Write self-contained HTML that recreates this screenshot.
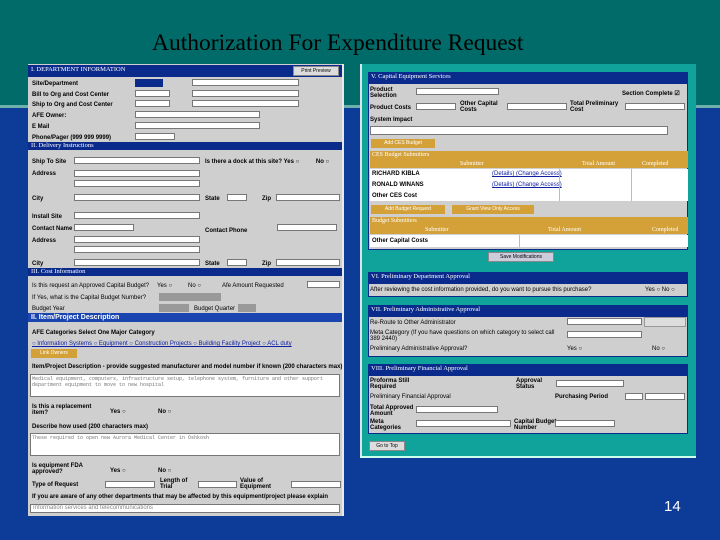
<!DOCTYPE html>
<html><head><style>
*{margin:0;padding:0;box-sizing:border-box}
body{width:720px;height:540px;overflow:hidden;background:#0d3b98;position:relative;font-family:"Liberation Sans",sans-serif;font-size:6px;color:#000}
.a{position:absolute}
.teal{left:0;top:0;width:720px;height:105px;background:#006b68}
.strip{left:0;top:105px;width:720px;height:3px;background:#6fb0ac}
h1{position:absolute;left:152px;top:30px;font-family:"Liberation Serif",serif;font-weight:normal;font-size:23.5px;color:#000;white-space:nowrap}
.hd{background:#0a2a8c;color:#fff;font-family:"Liberation Serif",serif;font-size:6.5px;padding-left:3px;line-height:10px}
.gr{background:#cfcfcf}
.in{background:#fff;border:1px solid #777;height:7px}
.gold{background:#d4a038;color:#fff}
.t{position:absolute;white-space:nowrap;font-weight:bold}
.n{font-weight:normal}
.s{position:absolute;top:0}
</style></head><body>
<div class="a teal"></div><div class="a strip"></div>
<h1>Authorization For Expenditure Request</h1>

<!-- Left panel -->
<div class="a gr" style="left:28px;top:64px;width:314px;height:452px"></div>
<div class="a" style="left:342px;top:64px;width:2px;height:452px;background:#e8e8e8"></div>
<div class="a hd" style="left:28px;top:65px;width:314px;height:12px">I. DEPARTMENT INFORMATION</div>
<div class="a" style="left:293px;top:66px;width:46px;height:10px;background:#ddd;border:1px solid #888;font-size:5px;text-align:center;line-height:8px">Print Preview</div>
<div class="t" style="left:32px;top:81px">Site/Department</div>
<div class="t" style="left:32px;top:92px">Bill to Org and Cost Center</div>
<div class="t" style="left:32px;top:102px">Ship to Org and Cost Center</div>
<div class="t" style="left:32px;top:113px">AFE Owner:</div>
<div class="t" style="left:32px;top:124px">E Mail</div>
<div class="t" style="left:32px;top:135px">Phone/Pager (999 999 9999)</div>
<div class="a" style="left:135px;top:79px;width:28px;height:8px;background:#0a2a8c"></div>
<div class="a in" style="left:135px;top:90px;width:35px"></div>
<div class="a in" style="left:135px;top:100px;width:35px"></div>
<div class="a in" style="left:192px;top:79px;width:107px"></div>
<div class="a in" style="left:192px;top:90px;width:107px"></div>
<div class="a in" style="left:192px;top:100px;width:107px"></div>
<div class="a in" style="left:135px;top:111px;width:125px"></div>
<div class="a in" style="left:135px;top:122px;width:125px"></div>
<div class="a in" style="left:135px;top:133px;width:40px"></div>
<div class="a hd" style="left:28px;top:142px;width:314px;height:8px;line-height:8px">II. Delivery Instructions</div>
<div class="t" style="left:32px;top:159px">Ship To Site</div>
<div class="t" style="left:32px;top:171px">Address</div>
<div class="t" style="left:32px;top:196px">City</div>
<div class="t" style="left:32px;top:214px">Install Site</div>
<div class="t" style="left:32px;top:226px">Contact Name</div>
<div class="t" style="left:32px;top:238px">Address</div>
<div class="t" style="left:32px;top:261px">City</div>
<div class="t" style="left:205px;top:159px">Is there a dock at this site? Yes ○ &nbsp;&nbsp;&nbsp;&nbsp;&nbsp;&nbsp;&nbsp;&nbsp; No ○</div>
<div class="t" style="left:205px;top:196px">State</div><div class="t" style="left:262px;top:196px">Zip</div>
<div class="t" style="left:205px;top:228px">Contact Phone</div>
<div class="t" style="left:205px;top:261px">State</div><div class="t" style="left:262px;top:261px">Zip</div>
<div class="a in" style="left:74px;top:157px;width:126px"></div>
<div class="a in" style="left:74px;top:170px;width:126px"></div>
<div class="a in" style="left:74px;top:180px;width:126px"></div>
<div class="a in" style="left:74px;top:194px;width:126px"></div>
<div class="a in" style="left:227px;top:194px;width:20px"></div>
<div class="a in" style="left:276px;top:194px;width:64px"></div>
<div class="a in" style="left:74px;top:212px;width:126px"></div>
<div class="a in" style="left:74px;top:224px;width:60px"></div>
<div class="a in" style="left:277px;top:224px;width:60px"></div>
<div class="a in" style="left:74px;top:236px;width:126px"></div>
<div class="a in" style="left:74px;top:246px;width:126px"></div>
<div class="a in" style="left:74px;top:259px;width:126px"></div>
<div class="a in" style="left:227px;top:259px;width:20px"></div>
<div class="a in" style="left:276px;top:259px;width:64px"></div>
<div class="a hd" style="left:28px;top:268px;width:314px;height:8px;line-height:8px">III. Cost Information</div>
<div class="t n" style="left:32px;top:283px">Is this request an Approved Capital Budget?</div>
<div class="t n" style="left:157px;top:283px">Yes ○</div>
<div class="t n" style="left:188px;top:283px">No ○</div>
<div class="t n" style="left:222px;top:283px">Afe Amount Requested</div>
<div class="a in" style="left:307px;top:281px;width:33px"></div>
<div class="t n" style="left:32px;top:295px">If Yes, what is the Capital Budget Number?</div>
<div class="a" style="left:159px;top:293px;width:62px;height:8px;background:#999"></div>
<div class="t n" style="left:32px;top:306px">Budget Year</div>
<div class="t n" style="left:194px;top:306px">Budget Quarter</div>
<div class="a" style="left:159px;top:304px;width:30px;height:8px;background:#999"></div>
<div class="a" style="left:238px;top:304px;width:18px;height:8px;background:#999"></div>
<div class="a" style="left:28px;top:313px;width:314px;height:9px;background:#1a44b0;color:#fff;font-size:7px;font-weight:bold;padding-left:3px;line-height:9px">II. Item/Project Description</div>
<div class="t" style="left:32px;top:330px">AFE Categories Select One Major Category</div>
<div class="t n" style="left:32px;top:341px;color:#1020a0;text-decoration:underline">○ Information Systems ○ Equipment ○ Construction Projects ○ Building Facility Project ○ ACL duty</div>
<div class="a gold" style="left:31px;top:349px;width:46px;height:9px;font-size:5px;text-align:center;line-height:9px">Link Owners</div>
<div class="t" style="left:32px;top:364px">Item/Project Description - provide suggested manufacturer and model number if known (200 characters max)</div>
<div class="a in" style="left:30px;top:374px;width:310px;height:23px;font-family:'Liberation Mono',monospace;font-size:5px;color:#777;font-weight:normal;padding:1px">Medical equipment, computers, infrastructure setup, telephone system, furniture and other support department equipment to move to new hospital</div>
<div class="t" style="left:32px;top:404px">Is this a replacement<br>item?</div>
<div class="t" style="left:110px;top:409px">Yes ○</div><div class="t" style="left:158px;top:409px">No ○</div>
<div class="t" style="left:32px;top:424px">Describe how used (200 characters max)</div>
<div class="a in" style="left:30px;top:433px;width:310px;height:23px;font-family:'Liberation Mono',monospace;font-size:5px;color:#777;font-weight:normal;padding:1px">These required to open new Aurora Medical Center in Oshkosh</div>
<div class="t" style="left:32px;top:463px">Is equipment FDA<br>approved?</div>
<div class="t" style="left:110px;top:468px">Yes ○</div><div class="t" style="left:158px;top:468px">No ○</div>
<div class="t" style="left:32px;top:482px">Type of Request</div>
<div class="a in" style="left:105px;top:481px;width:50px"></div>
<div class="t" style="left:160px;top:478px">Length of<br>Trial</div>
<div class="a in" style="left:198px;top:481px;width:39px"></div>
<div class="t" style="left:240px;top:478px">Value of<br>Equipment</div>
<div class="a in" style="left:291px;top:481px;width:50px"></div>
<div class="t" style="left:32px;top:494px">If you are aware of any other departments that may be affected by this equipment/project please explain</div>
<div class="a in" style="left:30px;top:504px;width:310px;height:9px;color:#888;font-weight:normal;padding-left:2px">Information services and telecommunications</div>

<!-- Right panel -->
<div class="a" style="left:360px;top:64px;width:336px;height:394px;background:#0fa39c;border-left:2px solid #d8e8e8"></div>
<div class="a" style="left:360px;top:456px;width:336px;height:2px;background:#cfe;"></div>
<div class="a gr" style="left:368px;top:72px;width:320px;height:178px;border:1px solid #0a2a8c"></div>
<div class="a hd" style="left:368px;top:72px;width:320px;height:12px">V. Capital Equipment Services</div>
<div class="t" style="left:370px;top:87px">Product<br>Selection</div>
<div class="a in" style="left:416px;top:88px;width:83px"></div>
<div class="t" style="left:622px;top:90px">Section Complete ☑</div>
<div class="t" style="left:370px;top:105px">Product Costs</div>
<div class="a in" style="left:416px;top:103px;width:40px"></div>
<div class="t" style="left:460px;top:101px">Other Capital<br>Costs</div>
<div class="a in" style="left:507px;top:103px;width:60px"></div>
<div class="t" style="left:570px;top:101px">Total Preliminary<br>Cost</div>
<div class="a in" style="left:625px;top:103px;width:60px"></div>
<div class="t" style="left:370px;top:117px">System Impact</div>
<div class="a in" style="left:370px;top:126px;width:298px;height:9px"></div>
<div class="a gold" style="left:371px;top:139px;width:64px;height:9px;font-size:5px;text-align:center;line-height:9px">Add CES Budget</div>
<div class="a gold" style="left:370px;top:151px;width:318px;height:9px;font-family:'Liberation Serif',serif;font-size:6px;padding-left:2px;line-height:9px">CES Budget Submitters</div>
<div class="a gold" style="left:370px;top:160px;width:318px;height:8px;font-family:'Liberation Serif',serif;font-size:6px;line-height:8px"><span class="s" style="left:90px">Submitter</span><span class="s" style="left:212px">Total Amount</span><span class="s" style="left:272px">Completed</span></div>
<div class="a" style="left:370px;top:169px;width:318px;height:32px;background:#fff"></div>
<div class="t" style="left:372px;top:171px">RICHARD KIBLA</div>
<div class="t" style="left:372px;top:182px">RONALD WINANS</div>
<div class="t" style="left:372px;top:193px">Other CES Cost</div>
<div class="t n" style="left:492px;top:171px;color:#1020a0;text-decoration:underline">(Details) (Change Access)</div>
<div class="t n" style="left:492px;top:182px;color:#1020a0;text-decoration:underline">(Details) (Change Access)</div>
<div class="a" style="left:559px;top:169px;width:1px;height:32px;background:#bbb"></div>
<div class="a" style="left:631px;top:169px;width:1px;height:32px;background:#bbb"></div>
<div class="a gold" style="left:371px;top:205px;width:74px;height:9px;font-size:5px;text-align:center;line-height:9px">Add Budget Request</div>
<div class="a gold" style="left:452px;top:205px;width:82px;height:9px;font-size:5px;text-align:center;line-height:9px">Grant View Only Access</div>
<div class="a gold" style="left:370px;top:217px;width:318px;height:9px;font-family:'Liberation Serif',serif;font-size:6px;padding-left:2px;line-height:9px">Budget Submitters</div>
<div class="a gold" style="left:370px;top:226px;width:318px;height:8px;font-family:'Liberation Serif',serif;font-size:6px;line-height:8px"><span class="s" style="left:55px">Submitter</span><span class="s" style="left:178px">Total Amount</span><span class="s" style="left:282px">Completed</span></div>
<div class="a" style="left:370px;top:235px;width:318px;height:12px;background:#fff"></div>
<div class="a" style="left:519px;top:235px;width:1px;height:12px;background:#bbb"></div>
<div class="t" style="left:372px;top:238px">Other Capital Costs</div>
<div class="a" style="left:488px;top:252px;width:66px;height:10px;background:#ccd;border:1px solid #888;font-size:5px;text-align:center;line-height:8px">Save Modifications</div>

<div class="a gr" style="left:368px;top:272px;width:320px;height:25px;border:1px solid #0a2a8c"></div>
<div class="a hd" style="left:368px;top:272px;width:320px;height:12px">VI. Preliminary Department Approval</div>
<div class="t n" style="left:370px;top:287px">After reviewing the cost information provided, do you want to pursue this purchase?</div>
<div class="t n" style="left:645px;top:287px">Yes ○ No ○</div>

<div class="a gr" style="left:368px;top:305px;width:320px;height:52px;border:1px solid #0a2a8c"></div>
<div class="a hd" style="left:368px;top:305px;width:320px;height:12px">VII. Preliminary Administrative Approval</div>
<div class="t n" style="left:370px;top:320px">Re-Route to Other Administrator</div>
<div class="a in" style="left:567px;top:318px;width:75px"></div>
<div class="a" style="left:644px;top:317px;width:42px;height:10px;background:#ddd;border:1px solid #999"></div>
<div class="t n" style="left:370px;top:330px">Meta Category (If you have questions on which category to select call<br>389 2440)</div>
<div class="a in" style="left:567px;top:331px;width:75px"></div>
<div class="t n" style="left:370px;top:346px">Preliminary Administrative Approval?</div>
<div class="t n" style="left:567px;top:346px">Yes ○</div><div class="t n" style="left:652px;top:346px">No ○</div>

<div class="a gr" style="left:368px;top:364px;width:320px;height:70px;border:1px solid #0a2a8c"></div>
<div class="a hd" style="left:368px;top:364px;width:320px;height:12px">VIII. Preliminary Financial Approval</div>
<div class="t" style="left:370px;top:378px">Proforma Still<br>Required</div>
<div class="t" style="left:516px;top:378px">Approval<br>Status</div>
<div class="a in" style="left:556px;top:380px;width:68px"></div>
<div class="t n" style="left:370px;top:394px">Preliminary Financial Approval</div>
<div class="t" style="left:555px;top:394px">Purchasing Period</div>
<div class="a in" style="left:625px;top:393px;width:18px"></div>
<div class="a in" style="left:645px;top:393px;width:40px"></div>
<div class="t" style="left:370px;top:405px">Total Approved<br>Amount</div>
<div class="a in" style="left:416px;top:406px;width:82px"></div>
<div class="t" style="left:370px;top:419px">Meta<br>Categories</div>
<div class="a in" style="left:416px;top:420px;width:95px"></div>
<div class="t" style="left:514px;top:419px">Capital Budget<br>Number</div>
<div class="a in" style="left:555px;top:420px;width:60px"></div>
<div class="a" style="left:369px;top:441px;width:36px;height:10px;background:#ddd;border:1px solid #888;font-size:5px;text-align:center;line-height:8px">Go to Top</div>

<div class="a" style="left:664px;top:498px;font-size:15px;color:#fff">14</div>
</body></html>
